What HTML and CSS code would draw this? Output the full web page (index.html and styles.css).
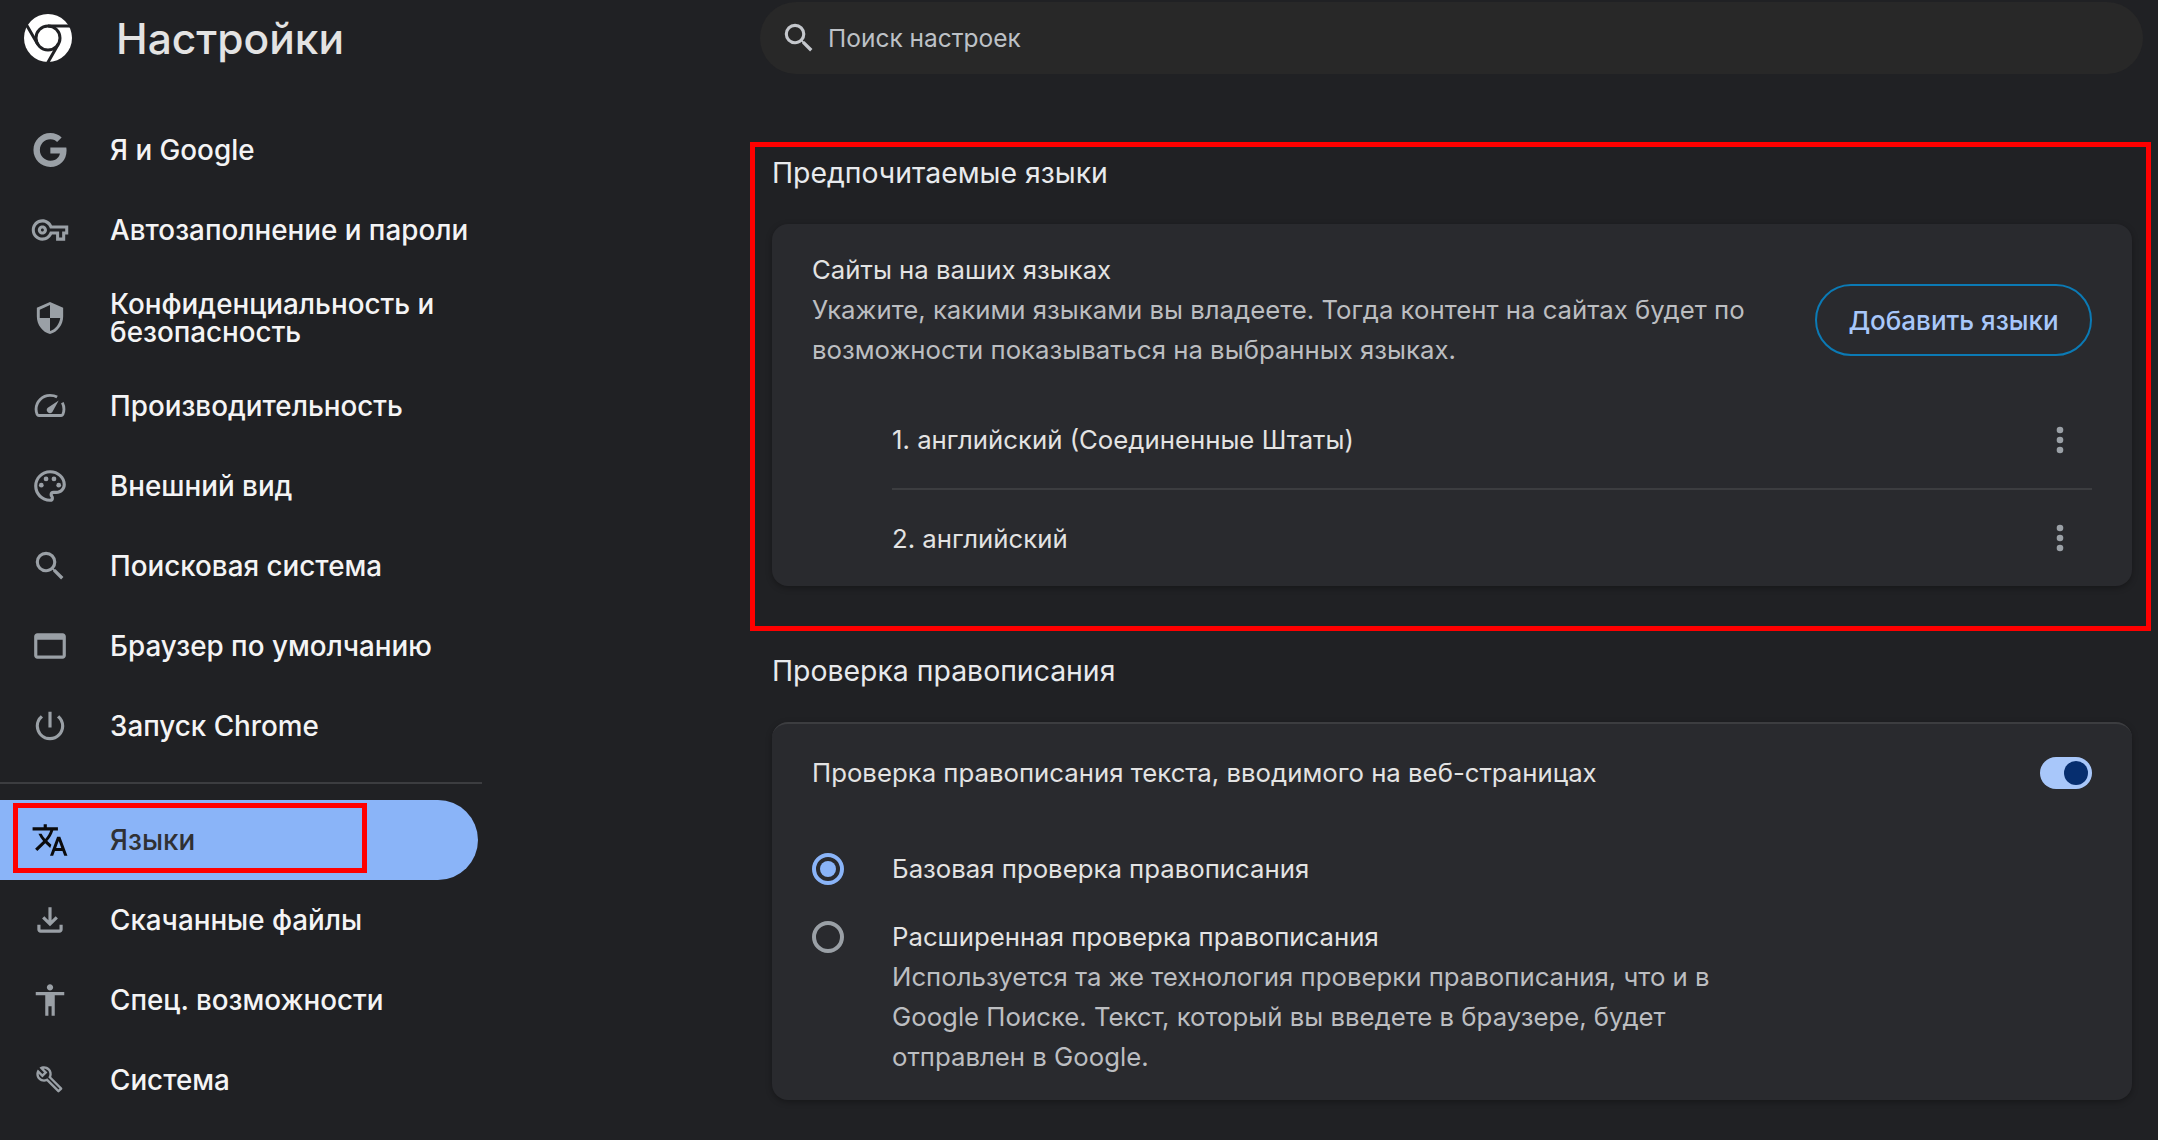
FILE: index.html
```html
<html lang="ru">
  <head>
    <meta charset="UTF-8" />
    <title>Настройки</title>
    <link rel="stylesheet" href="styles.css">
  </head>
  <body>
    <div class="page">
      <div class="sidebar">
        <div class="brand">
          <svg class="chromeLogo" viewBox="0 0 48 48">
            <circle cx="24" cy="24" r="24" fill="#fff"/>
            <circle cx="24" cy="24" r="12" fill="none" stroke="#202124" stroke-width="3"/>
            <path d="M24 12H48M34.400 30L23 50M13.600 30L2 10" fill="none" stroke="#202124" stroke-width="3"/>
          </svg>
          <span class="brandTitle">Настройки</span>
        </div>
        <div class="navGroup navGroupTop">
          <div class="navItem">
            <svg class="navIcon" viewBox="-1.500 -1.500 27 27"><path d="M12.240 10.285V14.400h6.806c-.275 1.765-2.056 5.174-6.806 5.174-4.095 0-7.439-3.389-7.439-7.574s3.345-7.574 7.439-7.574c2.330 0 3.891.989 4.785 1.849l3.254-3.138C18.189 1.186 15.479 0 12.240 0c-6.635 0-12 5.365-12 12s5.365 12 12 12c6.926 0 11.520-4.869 11.520-11.726 0-.788-.085-1.390-.189-1.989H12.240z"/></svg>
            <span>Я и Google</span>
          </div>
          <div class="navItem">
            <svg class="navIcon" viewBox="-.5 -.5 25 25"><path d="M22 19h-6v-4h-2.680c-1.140 2.420-3.600 4-6.320 4-3.860 0-7-3.140-7-7s3.140-7 7-7c2.720 0 5.170 1.580 6.320 4H24v6h-2v4zm-4-2h2v-4h2v-2H11.940l-.23-.67C11.010 8.340 9.110 7 7 7c-2.760 0-5 2.240-5 5s2.240 5 5 5c2.110 0 4.010-1.340 4.710-3.330l.23-.67H18v4zM7 15c-1.650 0-3-1.350-3-3s1.350-3 3-3 3 1.350 3 3-1.350 3-3 3zm0-4c-.55 0-1 .45-1 1s.45 1 1 1 1-.45 1-1-.45-1-1-1z"/></svg>
            <span>Автозаполнение и пароли</span>
          </div>
          <div class="navItem navItemTall">
            <svg class="navIcon" viewBox="-1 -1 26 26"><path d="M12 1L3 5v6c0 5.550 3.840 10.740 9 12 5.160-1.260 9-6.450 9-12V5l-9-4zm0 10.990h7c-.53 4.120-3.280 7.790-7 8.940V12H5V6.300l7-3.110v8.800z"/></svg>
            <span>Конфиденциальность и<br>безопасность</span>
          </div>
          <div class="navItem">
            <svg class="navIcon" viewBox="0 0 24 24">
              <path class="gaugeArc" d="M16.500 6.300C15.200 5.600 13.700 5.300 12 5.300 7.200 5.300 3.200 9.200 3.200 14c0 1.200.2 2.100.7 3.300.2.4.6.7 1.100.7h14c.5 0 .9-.3 1.100-.7.5-1.200.7-2.100.7-3.300 0-1.500-.4-2.900-1-4.100"/>
              <path d="M10.600 15.900a2 2 0 0 1 0-2.800L17.500 8.500l-4.100 7.400a2 2 0 0 1-2.800 0z"/>
            </svg>
            <span>Производительность</span>
          </div>
          <div class="navItem">
            <svg class="navIcon" viewBox="0 0 24 24"><path d="M12 22C6.490 22 2 17.510 2 12S6.490 2 12 2s10 4.040 10 9c0 3.310-2.690 6-6 6h-1.770c-.28 0-.5.22-.5.5 0 .12.05.23.13.33.41.47.64 1.060.64 1.670A2.500 2.500 0 0 1 12 22zm0-18c-4.410 0-8 3.590-8 8s3.590 8 8 8c.28 0 .5-.22.5-.5a.54.54 0 0 0-.14-.35c-.41-.46-.63-1.050-.63-1.650a2.500 2.500 0 0 1 2.500-2.500H16c2.210 0 4-1.790 4-4 0-3.860-3.590-7-8-7z"/><circle cx="6.500" cy="11.500" r="1.500"/><circle cx="9.500" cy="7.500" r="1.500"/><circle cx="14.500" cy="7.500" r="1.500"/><circle cx="17.500" cy="11.500" r="1.500"/></svg>
            <span>Внешний вид</span>
          </div>
          <div class="navItem">
            <svg class="navIcon" viewBox="0 0 24 24"><path d="M15.500 14h-.79l-.28-.27A6.471 6.471 0 0 0 16 9.500 6.500 6.500 0 1 0 9.500 16c1.610 0 3.090-.59 4.230-1.570l.27.28v.79l5 4.990L20.490 19l-4.990-5zm-6 0C7.010 14 5 11.990 5 9.500S7.010 5 9.500 5 14 7.010 14 9.500 11.990 14 9.500 14z"/></svg>
            <span>Поисковая система</span>
          </div>
          <div class="navItem">
            <svg class="navIcon" viewBox="0 0 24 24"><path d="M20 4H4c-1.100 0-2 .9-2 2v12c0 1.100.9 2 2 2h16c1.100 0 2-.9 2-2V6c0-1.100-.9-2-2-2zm0 14H4V8h16v10z"/></svg>
            <span>Браузер по умолчанию</span>
          </div>
          <div class="navItem">
            <svg class="navIcon" viewBox="0 0 24 24"><path d="M13 3h-2v10h2V3zm4.830 2.170-1.420 1.420A6.920 6.920 0 0 1 19 12c0 3.870-3.130 7-7 7A6.995 6.995 0 0 1 7.580 6.580L6.170 5.170A8.932 8.932 0 0 0 3 12c0 4.970 4.030 9 9 9s9-4.030 9-9c0-2.740-1.230-5.180-3.170-6.830z"/></svg>
            <span>Запуск Chrome</span>
          </div>
        </div>
        <div class="navDivider"></div>
        <div class="navGroup">
          <div class="navItem navItemActive">
            <svg class="navIcon" viewBox="0 0 24 24"><path d="M12.870 15.070l-2.540-2.510.03-.03c1.740-1.940 2.980-4.170 3.710-6.530H17V4h-7V2H8v2H1v1.990h11.170C11.500 7.920 10.440 9.750 9 11.350 8.070 10.320 7.300 9.190 6.690 8h-2c.73 1.630 1.730 3.170 2.980 4.560l-5.090 5.020L4 19l5-5 3.110 3.110.76-2.040zM18.500 10h-2L12 22h2l1.120-3h4.750L21 22h2l-4.500-12zm-2.620 7l1.620-4.330L19.120 17h-3.240z"/></svg>
            <span>Языки</span>
            <div class="navMark"></div>
          </div>
          <div class="navItem">
            <svg class="navIcon" viewBox="0 0 24 24"><path d="M18 15v3H6v-3H4v3c0 1.100.9 2 2 2h12c1.100 0 2-.9 2-2v-3h-2zm-1-4l-1.410-1.410L13 12.170V4h-2v8.170L8.410 9.590 7 11l5 5 5-5z"/></svg>
            <span>Скачанные файлы</span>
          </div>
          <div class="navItem">
            <svg class="navIcon" viewBox="0 0 24 24"><path d="M12 2c1.100 0 2 .9 2 2s-.9 2-2 2-2-.9-2-2 .9-2 2-2zm9 7h-6v13h-2v-6h-2v6H9V9H3V7h18v2z"/></svg>
            <span>Спец. возможности</span>
          </div>
          <div class="navItem">
            <svg class="navIcon" viewBox="-3.500 -3.500 32 32"><path d="M22.610 18.990l-9.080-9.080c.93-2.340.45-5.100-1.440-7C9.790.61 6.210.4 3.660 2.260L7.500 6.110 6.080 7.520 2.250 3.690C.39 6.230.6 9.820 2.900 12.110c1.860 1.860 4.570 2.350 6.890 1.480l9.110 9.110c.39.39 1.020.39 1.410 0l2.300-2.300c.4-.38.4-1.010 0-1.410zm-3 1.600l-9.460-9.460c-.61.45-1.290.72-2 .82-1.360.2-2.790-.21-3.830-1.250C3.370 9.760 2.930 8.500 3 7.260l3.090 3.090 4.240-4.240-3.090-3.090c1.240-.07 2.490.37 3.440 1.310 1.080 1.080 1.490 2.570 1.240 3.960-.12.71-.42 1.370-.88 1.960l9.450 9.450-.88.88z"/></svg>
            <span>Система</span>
          </div>
        </div>
      </div>

      <div class="main">
        <div class="searchBox">
          <svg class="searchIcon" viewBox="0 0 24 24"><path d="M15.500 14h-.79l-.28-.27A6.471 6.471 0 0 0 16 9.500 6.500 6.500 0 1 0 9.500 16c1.610 0 3.090-.59 4.230-1.570l.27.28v.79l5 4.990L20.490 19l-4.990-5zm-6 0C7.010 14 5 11.990 5 9.500S7.010 5 9.500 5 14 7.010 14 9.500 11.990 14 9.500 14z"/></svg>
          <span>Поиск настроек</span>
        </div>

        <div class="section sectionMarked">
          <h2 class="sectionTitle">Предпочитаемые языки</h2>
          <div class="card">
            <div class="cardHead">
              <div class="cardHeadText">
                <div class="primaryText">Сайты на ваших языках</div>
                <div class="secondaryText">Укажите, какими языками вы владеете. Тогда контент на сайтах будет по<br>возможности показываться на выбранных языках.</div>
              </div>
              <div class="addButton">Добавить языки</div>
            </div>
            <div class="langList">
              <div class="langRow">
                <span>1. английский (Соединенные Штаты)</span>
                <svg class="moreIcon" viewBox="0 0 8 30"><circle cx="4" cy="5" r="3.300"/><circle cx="4" cy="15" r="3.300"/><circle cx="4" cy="25" r="3.300"/></svg>
              </div>
              <div class="langRow langRowLast">
                <span>2. английский</span>
                <svg class="moreIcon" viewBox="0 0 8 30"><circle cx="4" cy="5" r="3.300"/><circle cx="4" cy="15" r="3.300"/><circle cx="4" cy="25" r="3.300"/></svg>
              </div>
            </div>
          </div>
        </div>

        <div class="section sectionPlain">
          <h2 class="sectionTitle">Проверка правописания</h2>
          <div class="card cardEdge">
            <div class="toggleRow">
              <div class="primaryText">Проверка правописания текста, вводимого на веб-страницах</div>
              <div class="toggle"><div class="toggleKnob"></div></div>
            </div>
            <div class="radioRow">
              <div class="radio radioOn"><div class="radioDot"></div></div>
              <div class="primaryText">Базовая проверка правописания</div>
            </div>
            <div class="radioRow radioRowLast">
              <div class="radio"></div>
              <div>
                <div class="primaryText">Расширенная проверка правописания</div>
                <div class="secondaryText">Используется та же технология проверки правописания, что и в<br>Google Поиске. Текст, который вы введете в браузере, будет<br>отправлен в Google.</div>
              </div>
            </div>
          </div>
        </div>
      </div>
    </div>
  </body>
</html>
```

FILE: styles.css
```css
* {
  margin: 0;
  padding: 0;
  box-sizing: border-box;
}
html, body {
  height: 100%;
  overflow: hidden;
}
body {
  background-color: #202124;
  font-family: Inter, "Noto Sans", sans-serif;
  color: #e3e3e3;
}
.page {
  display: flex;
  height: 100vh;
}

/* sidebar */
.sidebar {
  width: 760px;
  flex: none;
}
.brand {
  display: flex;
  align-items: center;
  height: 76px;
  padding-left: 24px;
}
.chromeLogo {
  width: 48px;
  height: 48px;
}
.brandTitle {
  margin-left: 44px;
  font-size: 42.500px;
  font-weight: 500;
  color: #e3e3e3;
}
.navGroup {
  display: flex;
  flex-direction: column;
}
.navGroupTop {
  margin-top: 34px;
}
.navItem {
  position: relative;
  display: flex;
  align-items: center;
  gap: 41px;
  width: 478px;
  height: 80px;
  padding-left: 31px;
  font-size: 27.800px;
  font-weight: 500;
  line-height: 28px;
  color: #f4f4f5;
}
.navItemTall {
  height: 96px;
}
.navItemActive {
  background-color: #8ab4f8;
  border-radius: 0 40px 40px 0;
  color: #303134;
}
.navItemActive .navIcon {
  fill: #0b0b0d;
}
.navIcon {
  width: 38px;
  height: 38px;
  flex: none;
  fill: #9aa0a6;
}
.gaugeArc {
  fill: none;
  stroke: #9aa0a6;
  stroke-width: 1.800;
}
.navDivider {
  width: 482px;
  height: 2px;
  margin: 16px 0;
  background-color: #3c3d40;
}
.navMark {
  position: absolute;
  left: 13px;
  top: 3px;
  width: 354px;
  height: 70px;
  border: 5px solid #ff0000;
}

/* main column */
.main {
  width: 1383px;
  flex: none;
}
.searchBox {
  display: flex;
  align-items: center;
  gap: 10px;
  height: 72px;
  margin-top: 2px;
  padding-left: 20px;
  border-radius: 36px;
  background-color: #282828;
  font-size: 24.500px;
  color: #bdc1c6;
}
.searchIcon {
  width: 38px;
  height: 38px;
  fill: #c4c7cc;
}
.section {
  position: relative;
}
.sectionMarked {
  width: 1401px;
  height: 489px;
  margin-top: 68px;
  margin-left: -10px;
  padding: 6px 14px 0 17px;
  border: 5px solid #ff0000;
}
.sectionPlain {
  width: 1360px;
  margin-top: 20px;
  margin-left: 12px;
}
.sectionTitle {
  display: flex;
  align-items: center;
  height: 40px;
  padding-bottom: 2px;
  font-size: 28.400px;
  font-weight: 400;
  color: #e8eaed;
}
.card {
  margin-top: 31px;
  border-radius: 16px;
  background-color: #292a2e;
  box-shadow: 0 2px 6px rgba(0, 0, 0, 0.3);
}
.cardEdge {
  border-top: 2px solid #3c3d40;
}
.cardHead {
  display: flex;
  align-items: center;
  justify-content: space-between;
  padding: 26px 40px 0 40px;
}
.primaryText {
  font-size: 25.750px;
  line-height: 40px;
  color: #e3e3e3;
}
.secondaryText {
  font-size: 25.750px;
  line-height: 40px;
  color: #bcbec1;
}
.addButton {
  display: flex;
  align-items: center;
  justify-content: center;
  width: 277px;
  height: 72px;
  margin-top: 20px;
  border: 2px solid #0b7ab5;
  border-radius: 36px;
  font-size: 26px;
  font-weight: 500;
  color: #a8c7fa;
}
.langList {
  margin: 21px 40px 0 120px;
}
.langRow {
  display: flex;
  align-items: center;
  justify-content: space-between;
  height: 99px;
  padding-right: 28px;
  border-bottom: 2px solid #3c3d40;
  font-size: 25.750px;
  color: #e3e3e3;
}
.langRowLast {
  height: 96px;
  border-bottom: none;
}
.moreIcon {
  width: 8px;
  height: 30px;
  fill: #9aa0a6;
}
.toggleRow {
  display: flex;
  align-items: center;
  justify-content: space-between;
  height: 98px;
  padding: 0 40px;
}
.toggle {
  display: flex;
  align-items: center;
  justify-content: flex-end;
  width: 52px;
  height: 32px;
  padding-right: 4px;
  border-radius: 16px;
  background-color: #a8c7fa;
}
.toggleKnob {
  width: 24px;
  height: 24px;
  border-radius: 50%;
  background-color: #062e6f;
}
.radioRow {
  display: flex;
  gap: 48px;
  padding-left: 40px;
  margin-top: 27px;
}
.radioRowLast {
  margin-top: 28px;
  padding-bottom: 23px;
}
.radio {
  display: flex;
  align-items: center;
  justify-content: center;
  width: 32px;
  height: 32px;
  margin-top: 4px;
  flex: none;
  border: 4px solid #9aa0a6;
  border-radius: 50%;
}
.radioOn {
  border-color: #8ab4f8;
}
.radioDot {
  width: 16px;
  height: 16px;
  border-radius: 50%;
  background-color: #8ab4f8;
}
```
